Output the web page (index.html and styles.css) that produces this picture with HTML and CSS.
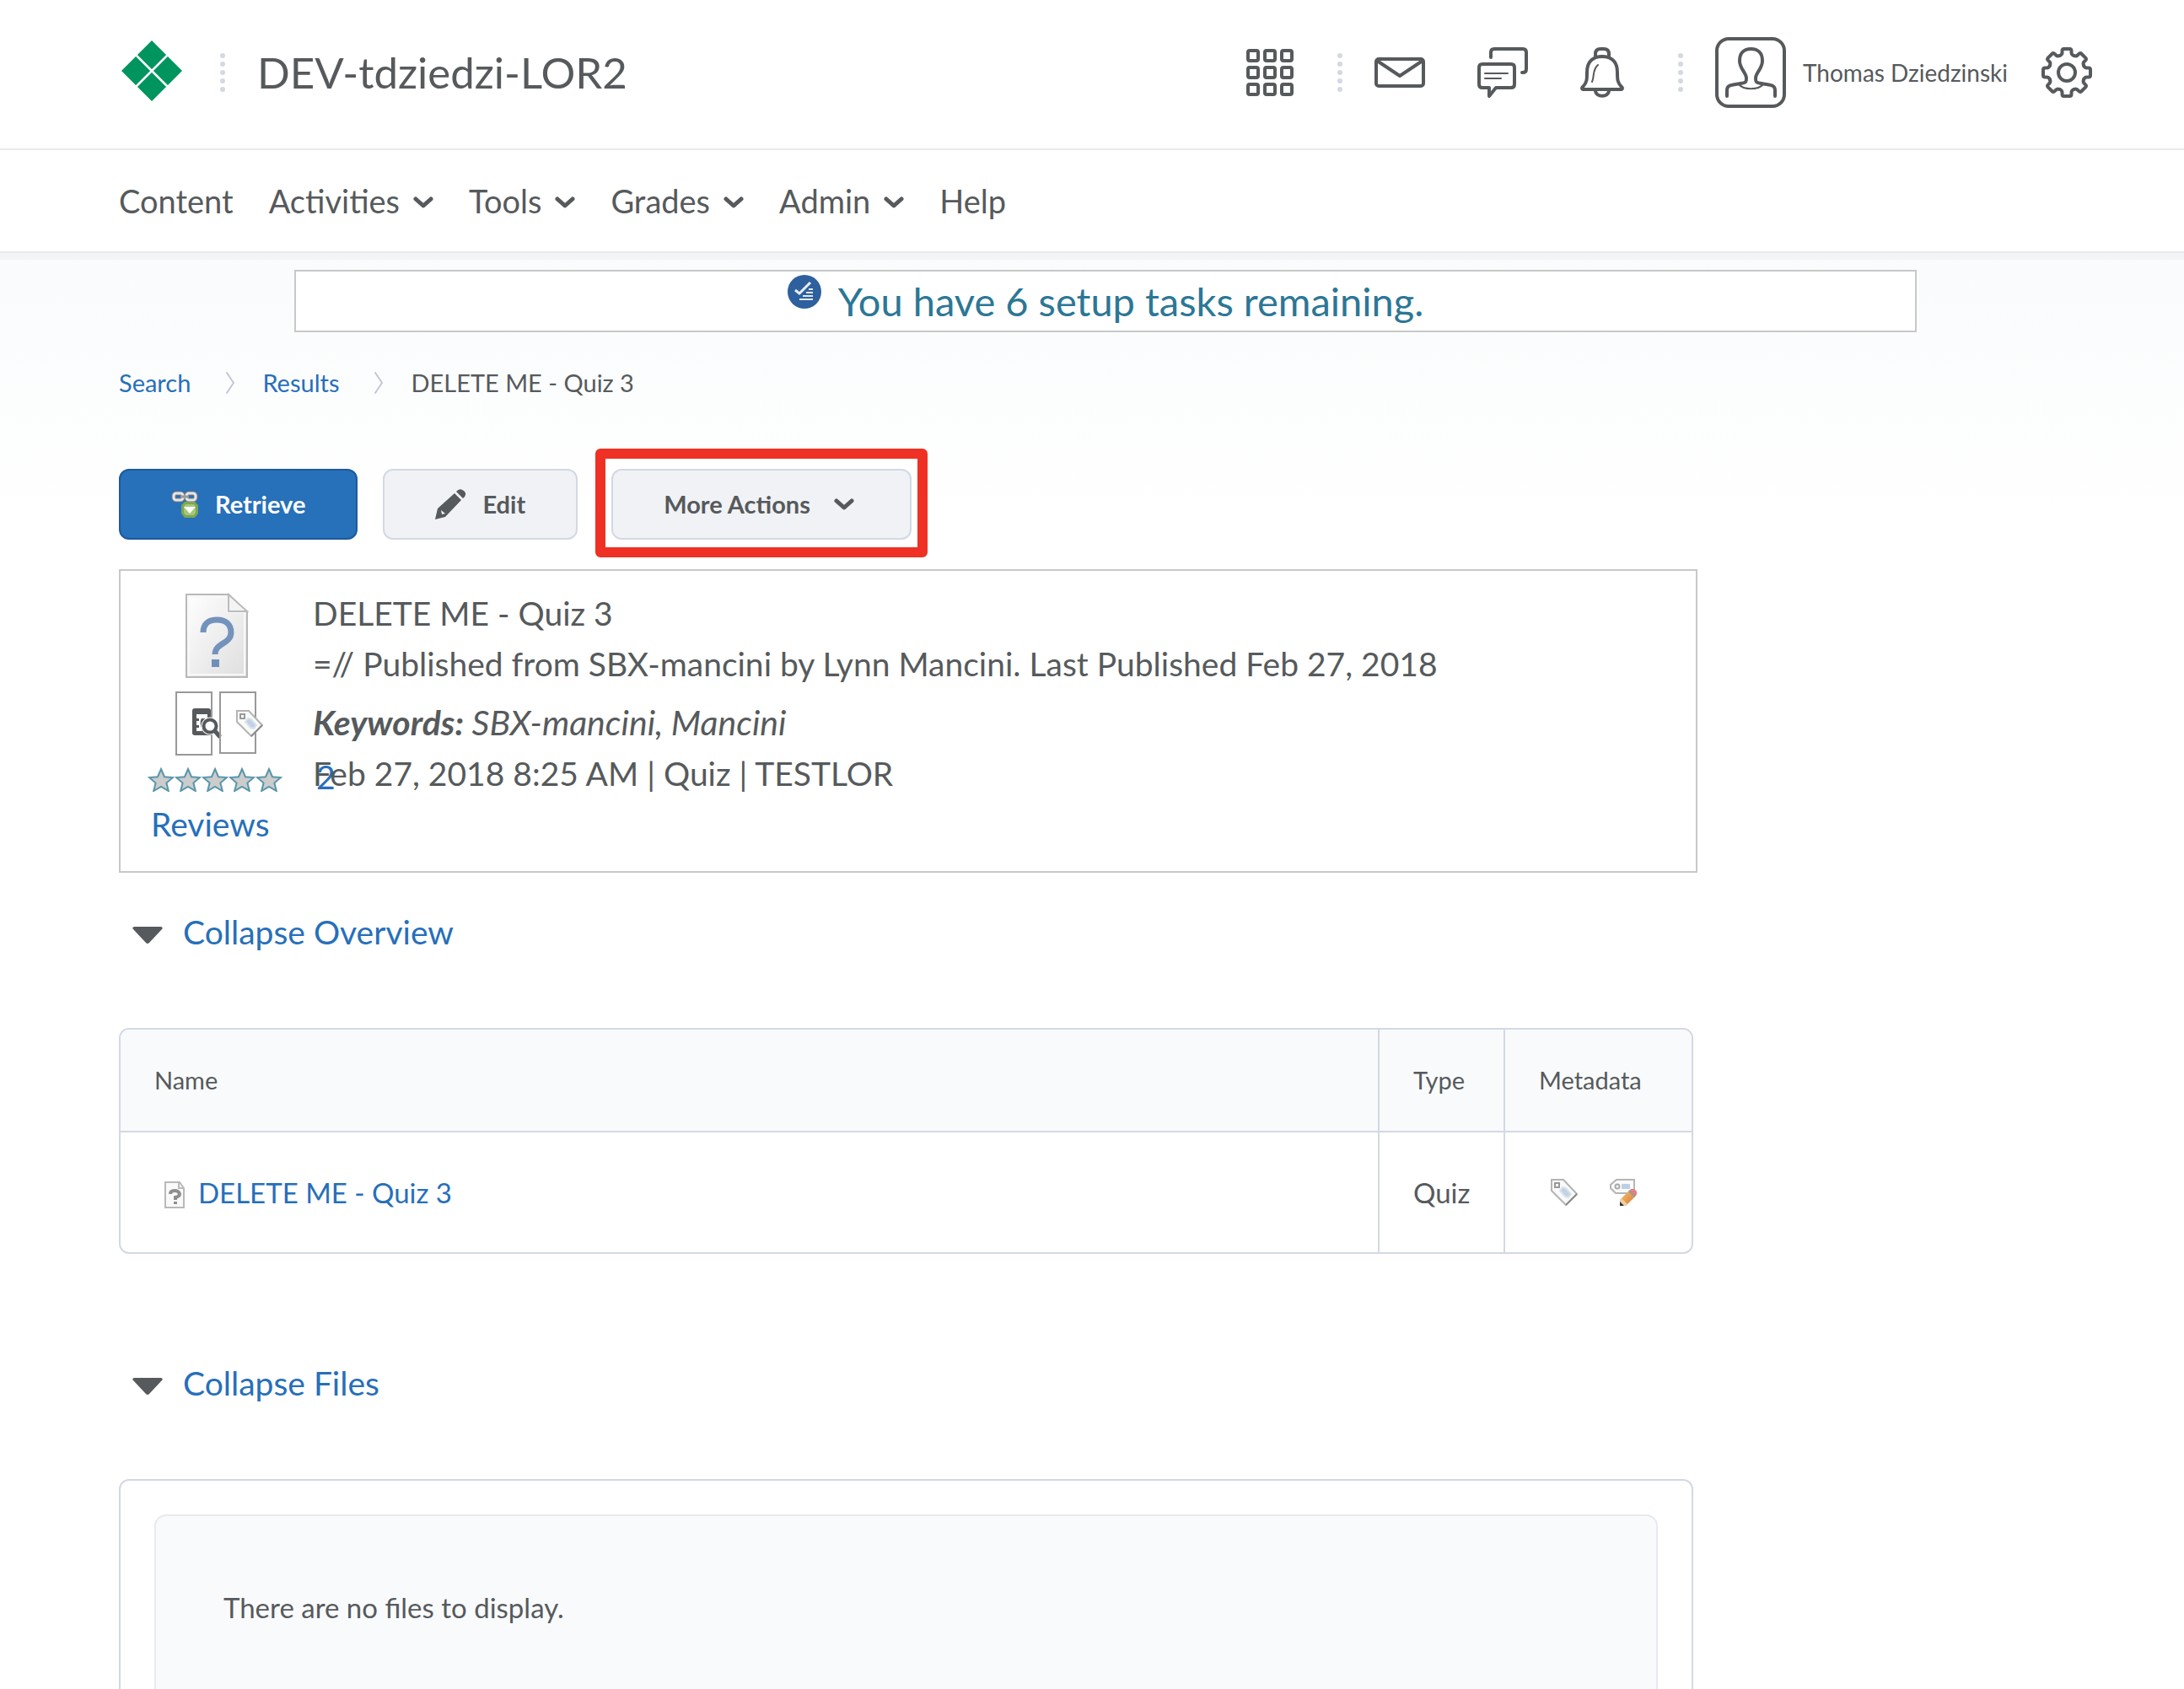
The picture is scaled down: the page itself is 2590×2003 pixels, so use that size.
FILE: index.html
```html
<!DOCTYPE html>
<html lang="en">
<head>
<meta charset="utf-8">
<title>DELETE ME - Quiz 3 - DEV-tdziedzi-LOR2</title>
<link rel="stylesheet" href="styles.css">
</head>
<body>
<svg class="defs" aria-hidden="true">
  <defs>
    <linearGradient id="paper" x1="0" y1="0" x2="1" y2="1"><stop offset="0" stop-color="#fff"/><stop offset="1" stop-color="#dedede"/></linearGradient>
    <linearGradient id="pencil" x1="0" y1="0" x2="1" y2="1"><stop offset="0" stop-color="#f6c27a"/><stop offset="1" stop-color="#d9772a"/></linearGradient>
    <symbol id="dots" viewBox="0 0 6 46"><g fill="#d3d9e3"><circle cx="3" cy="3" r="3"/><circle cx="3" cy="13" r="3"/><circle cx="3" cy="23" r="3"/><circle cx="3" cy="33" r="3"/><circle cx="3" cy="43" r="3"/></g></symbol>
    <symbol id="chevron" viewBox="0 0 24 14"><path d="M3 3l9 8 9-8" fill="none" stroke="#565a5c" stroke-width="5" stroke-linecap="round" stroke-linejoin="round"/></symbol>
    <symbol id="crumb" viewBox="0 0 11 26"><path d="M1 1l8 12-8 12" fill="none" stroke="#c0c8d8" stroke-width="2" stroke-linecap="round"/></symbol>
    <symbol id="triangle" viewBox="0 0 36 20"><path d="M2 0H34Q37 1 35 3L20 19Q18 21 16 19L1 3Q-1 1 2 0Z" fill="#565a5c"/></symbol>
    <symbol id="star" viewBox="0 0 32 30"><path d="M16 3l4 9.200 10 .8-7.600 6.600 2.400 9.400-8.800-5.200-8.800 5.200 2.400-9.400L2 13l10-.8z" fill="#ccc" stroke="#5796ab" stroke-width="2"/></symbol>
    <symbol id="tag" viewBox="0 0 32 32"><path d="M1 1h14l16 17-13 13L1 14z" fill="#fafafa" stroke="#b4b4b4" stroke-width="2"/><path d="M31 18L18 31" stroke="#8c8c8c" stroke-width="2"/><rect x="5" y="5" width="5" height="5" fill="#fff" stroke="#999" stroke-width="2"/><path d="M14 10l4 1 6 7-3 4-4-1-6-7z" fill="#c5cfe6" stroke="#d5e6ea" stroke-width="2"/></symbol>
    <path id="tooth" d="M-8.300-20C-7-20.600-5.500-21.500-5.500-23.500V-25.500Q-5.500-28-3.500-28H3.500Q5.500-28 5.500-25.500V-23.500C5.500-21.500 7-20.600 8.300-20"/>
  </defs>
</svg>

<header class="header">
  <a class="logo" href="#" aria-label="Home"><svg width="72" height="72" viewBox="0 0 72 72"><path d="M36 0L72 36 36 72 0 36Z" fill="#00945e"/><path d="M17 17L55 55M55 17L17 55" stroke="#fff" stroke-width="2.500"/></svg></a>
  <svg class="dots" width="6" height="46"><use href="#dots"/></svg>
  <a class="course" href="#">DEV-tdziedzi-LOR2</a>
  <div class="tools">
    <button class="icon-button" aria-label="Select a course"><svg width="56" height="56" viewBox="0 0 56 56"><g fill="none" stroke="#565a5c" stroke-width="4"><rect x="2" y="2" width="12" height="12" rx="2"/><rect x="22" y="2" width="12" height="12" rx="2"/><rect x="42" y="2" width="12" height="12" rx="2"/><rect x="2" y="22" width="12" height="12" rx="2"/><rect x="22" y="22" width="12" height="12" rx="2"/><rect x="42" y="22" width="12" height="12" rx="2"/><rect x="2" y="42" width="12" height="12" rx="2"/><rect x="22" y="42" width="12" height="12" rx="2"/><rect x="42" y="42" width="12" height="12" rx="2"/></g></svg></button>
    <svg class="tool-dots" width="6" height="46"><use href="#dots"/></svg>
    <div class="alerts">
      <button class="icon-button" aria-label="Messages"><svg width="60" height="36" viewBox="0 0 60 36"><g fill="none" stroke="#565a5c" stroke-width="4" stroke-linejoin="round"><rect x="2" y="2" width="56" height="32" rx="3"/><path d="M3 4L30 22 57 4"/></g></svg></button>
      <button class="icon-button" aria-label="Subscriptions"><svg width="60" height="60" viewBox="0 0 60 60"><g fill="none" stroke="#565a5c" stroke-width="4" stroke-linecap="round" stroke-linejoin="round"><path d="M16 12V6Q16 2 20 2H54Q58 2 58 6V26Q58 30 54 30H53"/><path d="M6 20H40Q44 20 44 24V44Q44 48 40 48H22L14 58V48H6Q2 48 2 44V24Q2 20 6 20Z"/><path d="M9 31H36M9 37H28" stroke-width="2"/></g></svg></button>
      <button class="icon-button" aria-label="Notifications"><svg width="52" height="60" viewBox="0 0 52 60"><g fill="none" stroke="#565a5c" stroke-width="4" stroke-linecap="round" stroke-linejoin="round"><path d="M3 50Q1 49 3 47C8 42 8 38 8 30C8 16 16 11 26 11S44 16 44 30C44 38 44 42 49 47Q51 49 49 50Z"/><path d="M18 11V8Q18 2 24 2H28Q34 2 34 8V11"/><path d="M18 51C18 60 34 60 34 51"/><path d="M21 21C14 27 17 35 14 41" stroke-width="2"/></g></svg></button>
    </div>
    <svg class="tool-dots" width="6" height="46"><use href="#dots"/></svg>
    <button class="profile"><svg width="84" height="84" viewBox="0 0 84 84"><g fill="none" stroke="#565a5c" stroke-width="4" stroke-linecap="round"><rect x="2" y="2" width="80" height="80" rx="14"/><path d="M14 70V63C14 56 21 57 30 55C37 54 37 53 37 49C37 42 29 38 29 28C29 19 34 14 42.500 14S56 19 56 28C56 38 48 42 48 49C48 53 48 54 55 55C64 57 71 56 71 63V70"/><path d="M28 56C34 63 51 63 57 56" stroke-width="2"/></g></svg>Thomas Dziedzinski</button>
    <button class="icon-button settings" aria-label="Settings"><svg width="60" height="60" viewBox="-30 -30 60 60"><g fill="none" stroke="#565a5c" stroke-width="4" stroke-linecap="round"><circle r="10"/><use href="#tooth"/><use href="#tooth" transform="rotate(45)"/><use href="#tooth" transform="rotate(90)"/><use href="#tooth" transform="rotate(135)"/><use href="#tooth" transform="rotate(180)"/><use href="#tooth" transform="rotate(225)"/><use href="#tooth" transform="rotate(270)"/><use href="#tooth" transform="rotate(315)"/></g></svg></button>
  </div>
</header>

<nav class="nav">
  <a href="#">Content</a>
  <button>Activities<svg width="24" height="14"><use href="#chevron"/></svg></button>
  <button>Tools<svg width="24" height="14"><use href="#chevron"/></svg></button>
  <button>Grades<svg width="24" height="14"><use href="#chevron"/></svg></button>
  <button>Admin<svg width="24" height="14"><use href="#chevron"/></svg></button>
  <a href="#">Help</a>
</nav>

<main class="main">
  <a class="banner" href="#"><svg width="40" height="40" viewBox="0 0 40 40"><circle cx="20" cy="20" r="20" fill="#2f609e"/><path d="M9 18l5 4L27 9" fill="none" stroke="#e8eef6" stroke-width="3"/><path d="M25 17h5M22 21h8M18 25h12M14 29h16" stroke="#dfe8f2" stroke-width="2"/></svg>You have 6 setup tasks remaining.</a>

  <ol class="crumbs">
    <li><a href="#">Search</a></li>
    <li><svg width="11" height="26"><use href="#crumb"/></svg><a href="#">Results</a></li>
    <li><svg width="11" height="26"><use href="#crumb"/></svg>DELETE ME - Quiz 3</li>
  </ol>

  <div class="actions">
    <button class="btn primary"><svg width="32" height="32" viewBox="0 0 32 32"><g fill="none" stroke="#7d7d7d" stroke-width="5"><rect x="3" y="3" width="11" height="8" rx="3"/><rect x="18" y="3" width="11" height="8" rx="3"/></g><g fill="none" stroke="#e6e6e6" stroke-width="3"><rect x="3" y="3" width="11" height="8" rx="3"/><rect x="18" y="3" width="11" height="8" rx="3"/></g><path d="M11 7h10" stroke="#9a9a9a" stroke-width="3"/><path d="M16 13h12l4 4v10l-4 5H16l-4-5V17z" fill="#7fa653"/><path d="M17 16h10l2 3v7l-2 3H17l-2-3v-7z" fill="#a3c978"/><path d="M15 19h14l-7 8z" fill="#fff"/></svg>Retrieve</button>
    <button class="btn"><svg width="36" height="36" viewBox="0 0 36 36"><path d="M0 36L3 23 23 5 31 13 12 33Z" fill="#565a5c"/><path d="M25 3Q29-2 34 2T33 11Z" fill="#565a5c"/><path d="M7 25l5 4-4 1z" fill="#f1f2f5"/></svg>Edit</button>
    <div class="highlight"><button class="btn menu">More Actions<svg width="24" height="14"><use href="#chevron"/></svg></button></div>
  </div>

  <section class="card">
    <div class="media">
      <svg class="doc" width="74" height="100" viewBox="0 0 74 100"><path d="M1 1H51L73 22V99H1Z" fill="url(#paper)" stroke="#b8b8b8" stroke-width="2"/><path d="M4 4H50V22H70V96H4Z" fill="none" stroke="#f8f8f8" stroke-width="2"/><path d="M51 1V21H73Z" fill="#f4f4f4" stroke="#bbb" stroke-width="2"/><path d="M21 46C21 36 27 31 37 31C48 31 54 37 54 46C54 60 35 58 35 72" fill="none" stroke="#7393bd" stroke-width="7"/><rect x="31" y="78" width="9" height="9" fill="#6f8fbb"/></svg>
      <div class="previews">
        <a class="thumb preview" href="#" aria-label="Preview"><svg width="32" height="34" viewBox="0 0 32 34"><path d="M3 0H19Q22 0 22 3V32H3Q0 32 0 29V3Q0 0 3 0Z" fill="#565a5c"/><path d="M5 7H18V12H11Q9 15 10 20L12 27H5V23H8V20H5V15H8V12H5Z" fill="#fff"/><circle cx="21" cy="21" r="10.500" fill="#fff"/><circle cx="21" cy="21" r="7.500" fill="#fff" stroke="#565a5c" stroke-width="4"/><path d="M27 27L33 34" stroke="#565a5c" stroke-width="5"/></svg></a>
        <a class="thumb" href="#" aria-label="Metadata"><svg width="32" height="32"><use href="#tag"/></svg></a>
      </div>
      <div class="rating">
        <div class="stars"><svg width="32" height="30"><use href="#star"/></svg><svg width="32" height="30"><use href="#star"/></svg><svg width="32" height="30"><use href="#star"/></svg><svg width="32" height="30"><use href="#star"/></svg><svg width="32" height="30"><use href="#star"/></svg></div>
        <a href="#">2</a>
      </div>
      <a class="reviews" href="#">Reviews</a>
    </div>
    <div class="details">
      <p>DELETE ME - Quiz 3</p>
      <p>=// Published from SBX-mancini by Lynn Mancini. Last Published Feb 27, 2018</p>
      <p class="keywords"><strong>Keywords:</strong> SBX-mancini, Mancini</p>
      <p>Feb 27, 2018 8:25 AM | Quiz | TESTLOR</p>
    </div>
  </section>

  <h2 class="section"><svg width="36" height="20"><use href="#triangle"/></svg><a href="#">Collapse Overview</a></h2>
  <table class="grid">
    <thead><tr><th class="name">Name</th><th class="type">Type</th><th class="meta">Metadata</th></tr></thead>
    <tbody><tr>
      <td><div class="item"><svg width="24" height="32" viewBox="0 0 24 32"><path d="M1 1H18L23 8V31H1Z" fill="#fafafa" stroke="#b9b9b9" stroke-width="2"/><path d="M17 1V8H23" fill="none" stroke="#b9b9b9" stroke-width="2"/><path d="M7 15Q7 11 12 11T18 15Q18 18 13 19V22" fill="none" stroke="#8f8f8f" stroke-width="4"/><rect x="11" y="24" width="4" height="3" fill="#8f8f8f"/></svg><a href="#">DELETE ME - Quiz 3</a></div></td>
      <td>Quiz</td>
      <td><div class="meta-icons">
        <a href="#" aria-label="View metadata"><svg width="32" height="32"><use href="#tag"/></svg></a>
        <a href="#" aria-label="Edit metadata"><svg width="32" height="32" viewBox="0 0 32 32"><path d="M8 1H29V17H7L1 11V7Z" fill="#fafafa" stroke="#b5b5b5" stroke-width="2"/><circle cx="9" cy="9" r="2.500" fill="#fff" stroke="#aaa" stroke-width="2"/><rect x="14" y="6" width="10" height="6" rx="1" fill="#bccfe6"/><path d="M12 32V25L24 13 31 20 19 32Z" fill="url(#pencil)"/><path d="M12 32V25L14 23 21 30 19 32Z" fill="#ecd0a4"/><path d="M12 32V27L17 32Z" fill="#333"/><path d="M22 15L24 13 31 20 29 22Z" fill="#999"/><path d="M25 12H29L32 15V19L30 20 24 14Z" fill="#e58080"/></svg></a>
      </div></td>
    </tr></tbody>
  </table>

  <h2 class="section files-heading"><svg width="36" height="20"><use href="#triangle"/></svg><a href="#">Collapse Files</a></h2>
  <section class="files"><p class="empty">There are no files to display.</p></section>
</main>
</body>
</html>
```

FILE: styles.css
```css
* { box-sizing: border-box; }

body {
  display: flex;
  flex-direction: column;
  min-height: 100vh;
  margin: 0;
  background: #fff;
  color: #565a5c;
  font: 39px/60px Lato, "Open Sans", sans-serif;
}

a { color: #276fba; text-decoration: none; }
button { padding: 0; border: 0; background: none; color: inherit; font: inherit; cursor: pointer; }
svg { display: block; flex: none; overflow: visible; }
.defs { position: absolute; width: 0; height: 0; }

.header {
  display: flex;
  align-items: center;
  padding: 44px 109px 48px 144px;
  border-bottom: 2px solid #e6eaf0;
  min-height: 178px;
}
.logo { padding-bottom: 4px; }
.dots { margin: 0 38px 0 45px; }
.course { color: #565a5c; font-size: 51px; }
.tools { display: flex; align-items: center; margin-left: auto; }
.tool-dots { margin: 0 38px 0 52px; }
.alerts { display: flex; align-items: center; gap: 62px; }
.alerts + .tool-dots { margin-left: 64px; }
.profile { display: flex; align-items: center; gap: 20px; font-size: 28px; }
.settings { margin-left: 40px; }

.nav {
  position: relative;
  display: flex;
  align-items: center;
  gap: 42px;
  min-height: 122px;
  padding: 0 109px 0 141px;
  border-bottom: 2px solid #e6eaf0;
  box-shadow: 0 8px 0 #f3f4f6;
  font-size: 38px;
}
.nav a { color: inherit; }
.nav button { display: flex; align-items: center; gap: 16px; }
.nav svg { margin-top: 4px; }

.main {
  display: flex;
  flex: 1;
  flex-direction: column;
  padding: 20px 109px 0 141px;
  background: linear-gradient(#f9fbfc, #fff 320px);
}

.banner {
  display: flex;
  align-items: center;
  justify-content: center;
  gap: 20px;
  width: 100%;
  max-width: 1924px;
  height: 74px;
  margin: 0 auto;
  border: 2px solid #c8c8c8;
  background: #fff;
  color: #2c7795;
  font-size: 47px;
}
.banner svg { margin-bottom: 22px; }

.crumbs {
  display: flex;
  gap: 42px;
  margin: 40px 0 0;
  padding: 0;
  font-size: 29px;
  line-height: 40px;
  list-style: none;
}
.crumbs li { display: flex; align-items: center; gap: 32px; }

.actions { display: flex; align-items: flex-start; gap: 30px; margin-top: 82px; }
.btn {
  display: flex;
  align-items: center;
  gap: 20px;
  height: 84px;
  padding: 0 60px;
  border: 2px solid #d3d9e3;
  border-radius: 12px;
  background: #f1f2f5;
  font-size: 29px;
  font-weight: 700;
}
.primary { border-color: #1d5a9b; background: #2770ba; color: #fff; }
.menu { gap: 28px; padding-right: 66px; }
.highlight {
  padding: 12px 7px 9px;
  margin: -24px 0 -21px -9px;
  border: 12px solid #ee3124;
  border-radius: 6px;
  background: #fff;
}

.card {
  display: flex;
  gap: 36px;
  max-width: 1872px;
  min-height: 360px;
  margin-top: 35px;
  padding: 20px 32px;
  border: 2px solid #c8c8c8;
  background: #fff;
}
.media { width: 160px; }
.doc { margin: 7px 0 0 45px; }
.previews { display: flex; align-items: flex-start; gap: 8px; margin: 16px 0 0 33px; }
.thumb { width: 44px; height: 74px; padding: 20px 18px; border: 2px solid #999; }
.preview { height: 76px; padding-top: 18px; }
.rating { display: flex; align-items: center; gap: 40px; height: 56px; }
.rating a { padding-bottom: 6px; }
.stars { display: flex; }
.reviews { display: block; margin-left: 4px; line-height: 50px; }
.details p { margin: 0; }
.details .keywords { margin-top: 10px; font-size: 41px; font-style: italic; }

.section {
  display: flex;
  align-items: center;
  gap: 24px;
  margin: 40px 0 0 16px;
  font-size: 39px;
  font-weight: 400;
}
.section svg { margin-top: 8px; }

.grid {
  width: 100%;
  max-width: 1867px;
  margin-top: 84px;
  border: 2px solid #d3d9e3;
  border-radius: 12px;
  border-spacing: 0;
  background: #fff;
  font-size: 33px;
  line-height: 40px;
  table-layout: fixed;
  overflow: hidden;
}
.grid th { height: 122px; padding: 0 40px; border-bottom: 2px solid #d3d9e3; background: #f9fafc; font-size: 29px; font-weight: 400; text-align: left; }
.grid td { height: 142px; padding: 0 40px; }
.grid th + th, .grid td + td { border-left: 2px solid #d3d9e3; }
.grid .type { width: 149px; }
.grid .meta { width: 223px; }
.item { display: flex; align-items: center; gap: 16px; padding-left: 12px; }
.item svg { margin-top: 6px; }
.meta-icons { display: flex; gap: 38px; padding-left: 14px; }

.files-heading { margin-top: 123px; }
.files {
  flex: 1;
  display: flex;
  max-width: 1867px;
  min-height: 250px;
  margin-top: 84px;
  padding: 40px 40px 0;
  border: 2px solid #d3d9e3;
  border-bottom: 0;
  border-radius: 12px 12px 0 0;
  background: #fff;
}
.empty {
  flex: 1;
  margin: 0;
  padding: 88px 80px 0;
  border: 2px solid #e6eaf0;
  border-bottom: 0;
  border-radius: 14px 14px 0 0;
  background: #f9fafc;
  font-size: 33px;
  line-height: 40px;
}
```
